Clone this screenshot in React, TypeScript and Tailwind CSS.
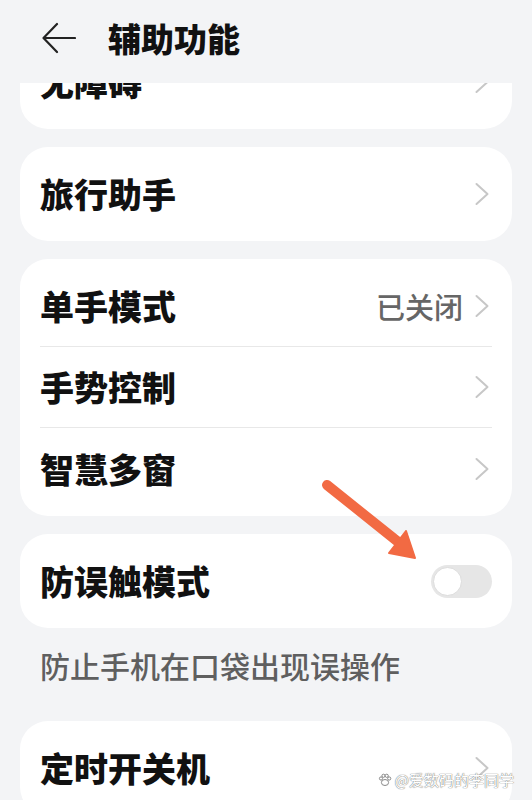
import type { ReactNode } from 'react'

const font = '"Noto Sans CJK SC", "Noto Sans", sans-serif'

function Chevron() {
  return (
    <svg width="14" height="24" viewBox="0 0 14 24" fill="none" className="mr-[3px] shrink-0">
      <path d="M1.5 2 L12.5 12 L1.5 22" stroke="#c7c7c7" strokeWidth="2" strokeLinecap="round" strokeLinejoin="round" />
    </svg>
  )
}

function Card({ children, className = '' }: { children: ReactNode; className?: string }) {
  return <div className={`mx-5 rounded-[28px] bg-white px-5 ${className}`}>{children}</div>
}

function Label({ text }: { text: string }) {
  return <span className="text-[34px] font-black leading-none text-[#111]">{text}</span>
}

function Row({ label, right }: { label: string; right?: ReactNode }) {
  return (
    <div className="flex h-[94px] items-center justify-between">
      <Label text={label} />
      {right ?? <Chevron />}
    </div>
  )
}

function Toggle() {
  return (
    <div className="flex h-[33px] w-[61px] items-center rounded-full bg-[#e6e6e6] p-[2px]">
      <div className="h-[29px] w-[29px] rounded-full border border-[#dcdcdc] bg-white" />
    </div>
  )
}

function PawIcon() {
  return (
    <svg width="14" height="14" viewBox="0 0 14 14" fill="white" stroke="#888" strokeWidth="1">
      <ellipse cx="7" cy="9.5" rx="3.6" ry="3" />
      <circle cx="3" cy="5.5" r="1.6" />
      <circle cx="5.5" cy="2.8" r="1.6" />
      <circle cx="8.7" cy="2.8" r="1.6" />
      <circle cx="11.2" cy="5.5" r="1.6" />
    </svg>
  )
}

export default function App() {
  return (
    <div
      className="relative flex h-[800px] w-[532px] flex-col overflow-hidden bg-[#f3f4f6]"
      style={{ fontFamily: font }}
    >
      <header className="flex h-[83px] shrink-0 items-start gap-[32px] pl-[42px] pt-[20px]">
        <svg width="34" height="32" viewBox="0 0 34 32" fill="none" className="mt-[2px]">
          <path d="M15 2 L1.5 16 L15 30 M1.5 16 H33" stroke="#222" strokeWidth="2.2" strokeLinecap="round" strokeLinejoin="round" />
        </svg>
        <h1 className="text-[33px] font-black leading-[36px] text-[#111]">辅助功能</h1>
      </header>

      <div className="flex-1 overflow-hidden">
        <div className="-mt-[48px] flex flex-col">
          <Card>
            <Row label="无障碍" />
          </Card>

          <Card className="mt-[18px]">
            <Row label="旅行助手" />
          </Card>

          <Card className="mt-[18px] py-[7px]">
            <div className="flex h-[81px] items-center justify-between border-b border-[#e8e8e8]">
              <Label text="单手模式" />
              <div className="flex items-center gap-3">
                <span className="text-[29px] font-medium leading-none text-[#666]">已关闭</span>
                <Chevron />
              </div>
            </div>
            <div className="flex h-[81px] items-center justify-between border-b border-[#e8e8e8]">
              <Label text="手势控制" />
              <Chevron />
            </div>
            <div className="flex h-[81px] items-center justify-between">
              <Label text="智慧多窗" />
              <Chevron />
            </div>
          </Card>

          <Card className="mt-[18px]">
            <Row label="防误触模式" right={<Toggle />} />
          </Card>

          <p className="mt-[19px] px-10 text-[30px] font-medium leading-[36px] text-[#5f5f5f]">防止手机在口袋出现误操作</p>

          <Card className="mt-[38px]">
            <Row label="定时开关机" />
          </Card>
        </div>
      </div>

      <svg className="pointer-events-none absolute left-0 top-0" width="532" height="800" viewBox="0 0 532 800">
        <line x1="327" y1="485" x2="397" y2="541" stroke="#f26a43" strokeWidth="10" strokeLinecap="round" />
        <polygon points="389,553 415,558 406,531" fill="#f26a43" stroke="#f26a43" strokeWidth="2" strokeLinejoin="round" />
      </svg>

      <div className="absolute bottom-[13px] right-[18px] flex items-center gap-[3px] text-[15px] leading-none text-white [text-shadow:0_0_1px_#777,0_0_1px_#777]">
        <PawIcon />
        <span>@爱数码的李同学</span>
      </div>
    </div>
  )
}
